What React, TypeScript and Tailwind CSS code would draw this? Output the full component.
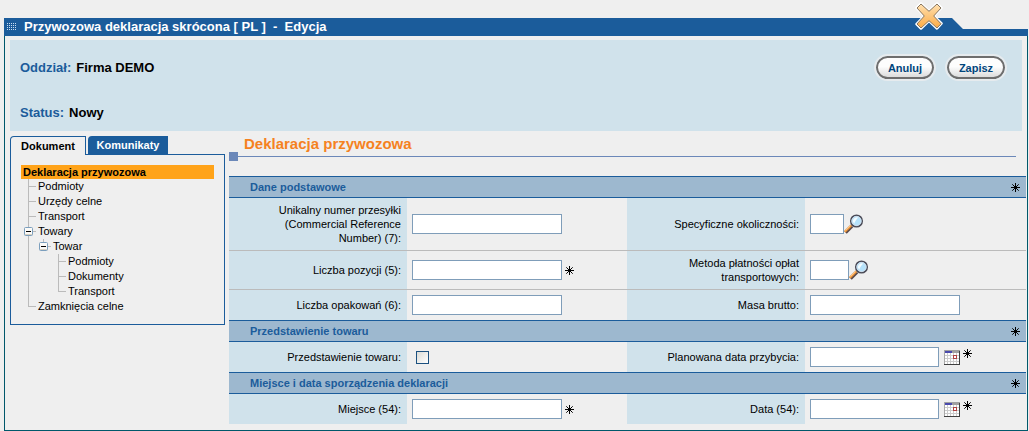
import type { ReactNode } from 'react';
import { clsx } from 'clsx';

type TreeCell = 'line' | 'blank' | 'branch' | 'end' | 'open' | 'openChild';

const TREE: { label: string; cells: TreeCell[] }[] = [
  { label: 'Podmioty', cells: ['branch'] },
  { label: 'Urzędy celne', cells: ['branch'] },
  { label: 'Transport', cells: ['branch'] },
  { label: 'Towary', cells: ['open'] },
  { label: 'Towar', cells: ['line', 'openChild'] },
  { label: 'Podmioty', cells: ['line', 'blank', 'branch'] },
  { label: 'Dokumenty', cells: ['line', 'blank', 'branch'] },
  { label: 'Transport', cells: ['line', 'blank', 'end'] },
  { label: 'Zamknięcia celne', cells: ['end'] },
];

const CELL_PATHS: Record<TreeCell, string> = {
  line: 'M7.5 0V15',
  blank: '',
  branch: 'M7.5 0V15M7 7.5H15',
  end: 'M7.5 0V8M7 7.5H15',
  open: 'M7.5 0V15M7 7.5H15',
  openChild: 'M7.5 0V8M7 7.5H15',
};

function TreeConnector({ cell }: { cell: TreeCell }) {
  const isOpen = cell === 'open' || cell === 'openChild';
  return (
    <svg width="15" height="15" viewBox="0 0 15 15" fill="none" className="shrink-0" aria-hidden="true">
      <path d={CELL_PATHS[cell]} stroke="#bbbbbb" />
      {isOpen && (
        <>
          <rect x="3.5" y="3.5" width="8" height="8" rx="1" fill="#fbfaf7" stroke="#7b9ebd" />
          <path d="M4 10.5H11" stroke="#d8d0c0" />
          <path d="M5 7.5H10" stroke="#000" />
        </>
      )}
    </svg>
  );
}

function Required() {
  return (
    <svg width="9" height="9" viewBox="0 0 9 9" className="shrink-0" aria-label="wymagane">
      <path d="M4.5 0V9M0 4.5H9" stroke="#000" />
      <path d="M1.3 1.3L7.7 7.7M7.7 1.3L1.3 7.7" stroke="#000" />
      <rect x="3" y="3" width="3" height="3" />
    </svg>
  );
}

function Magnifier() {
  return (
    <svg width="20" height="20" viewBox="0 0 20 20" fill="none">
      <path d="M1.5 18.5L8 12" stroke="#5d4a4a" strokeWidth="3.6" />
      <path d="M.8 17.8L7.4 11.2" stroke="#f39a3c" strokeWidth="2.2" />
      <path d="M1.5 16.5L6.5 11.5" stroke="#ffd09a" strokeWidth=".8" />
      <circle cx="12.5" cy="7" r="5.8" fill="#b5e2fb" stroke="#4c4c58" strokeWidth="1.5" />
      <circle cx="12.5" cy="7" r="4.6" stroke="#d3deea" strokeWidth=".9" />
      <path d="M9 8C8.6 5 10.5 3.2 13.8 3.2C14.2 4.5 11 6 10.4 9.8Z" fill="#f4fcff" />
    </svg>
  );
}

function CalendarIcon() {
  return (
    <svg width="16" height="15" viewBox="0 0 16 15" fill="none">
      <rect width="16" height="15" fill="#fff" />
      <path d="M3.5 3V14M6.5 3V14M9.5 3V14M12.5 3V14M1 5.5H15M1 8.5H15M1 11.5H15" stroke="#cccccc" />
      <rect width="16" height="3" fill="#a0a0a0" />
      <rect x="1" y="1" width="7" height="2" fill="#4a4aae" />
      <path d="M0.5 0V15" stroke="#a8a8a8" />
      <path d="M15.5 1V15M0 14.5H16" stroke="#404040" />
      <rect x="9.5" y="5.5" width="3" height="3" fill="#fff" stroke="#b04040" />
    </svg>
  );
}

function CloseIcon() {
  return (
    <svg width="28" height="28" viewBox="0 0 28 28">
      <defs>
        <linearGradient id="close-fill" x1="0" y1="0" x2="0" y2="1">
          <stop offset="0" stopColor="#ffe0b0" />
          <stop offset="1" stopColor="#fbab45" />
        </linearGradient>
      </defs>
      <path
        d="M6 1.5L14 9.2L22 1.5L26.5 6L18.8 14L26.5 21.5L22 26.5L14 18.8L6 26.5L1.5 22L9.2 14L1.5 6Z"
        fill="#fff"
        stroke="#fff"
        strokeWidth="2.5"
        strokeLinejoin="round"
      />
      <path
        d="M6 2L14 9.3L22 2L26 6L18.7 14L26 21.8L22 26L14 18.7L6 26L2 22L9.3 14L2 6Z"
        fill="url(#close-fill)"
        stroke="#85745f"
        strokeLinejoin="round"
      />
    </svg>
  );
}

function GripIcon() {
  return (
    <svg width="10" height="8" viewBox="0 0 10 8" aria-hidden="true">
      <path d="M0 .5H10M0 2.5H10M0 4.5H10M0 6.5H10" stroke="#c8dcf0" strokeDasharray="1 1" />
    </svg>
  );
}

function PillButton({ children }: { children: ReactNode }) {
  return (
    <button
      type="button"
      className="h-[23px] w-[58px] rounded-full border-2 border-[#6e6e6e] bg-linear-to-b from-[#fdfdfd] from-45% to-[#dcdcdc] text-[11px] leading-4 font-bold text-[#00457c] outline-2 outline-[#e6ebee]"
    >
      {children}
    </button>
  );
}

function SectionHeader({ title }: { title: string }) {
  return (
    <div className="flex h-[22px] items-center justify-between border-y border-[#1b5c9b] bg-[#9db8cf] pr-[6px] pl-[21px]">
      <h3 className="leading-4 font-bold text-[#1b5c9b]">{title}</h3>
      <Required />
    </div>
  );
}

function Row({ children, className }: { children: ReactNode; className?: string }) {
  return <div className={clsx('grid grid-cols-[178px_1fr_178px_1fr] pr-px', className)}>{children}</div>;
}

function Field({ id, label, children }: { id: string; label: string; children: ReactNode }) {
  return (
    <>
      <div className="flex items-center justify-end bg-[#d0e2eb] pr-[6px] pl-10">
        <label htmlFor={id} className="text-right leading-[14px]">{label}</label>
      </div>
      <div className="flex items-center pl-[5px]">{children}</div>
    </>
  );
}

function TextInput({ id, className }: { id: string; className: string }) {
  return <input id={id} type="text" className={clsx('h-5 border border-[#7f9db9] bg-white px-1 outline-none', className)} />;
}

function LookupField({ id, className }: { id: string; className: string }) {
  return (
    <>
      <TextInput id={id} className={className} />
      <button type="button" aria-label="Szukaj"><Magnifier /></button>
    </>
  );
}

function DateField({ id }: { id: string }) {
  return (
    <>
      <TextInput id={id} className="w-[129px]" />
      <button type="button" aria-label="Wybierz datę" className="ml-[5px]"><CalendarIcon /></button>
      <span className="mb-2 ml-[3px]"><Required /></span>
    </>
  );
}

export default function App() {
  return (
    <div className="bg-[#efefef] pt-[18px] pr-px pl-1 font-['Liberation_Sans',Arial,sans-serif] text-[11px] text-black">
      <div className="relative">
        <header className="flex h-[18px] items-center bg-[#1b5c9b] pl-[3px] [clip-path:polygon(0_0,calc(100%-76px)_0,calc(100%-65px)_11px,100%_11px,100%_100%,0_100%)]">
          <GripIcon />
          <h1 className="ml-[7px] text-[13px] leading-4 font-bold whitespace-pre text-white">
            {'Przywozowa deklaracja skrócona [ PL ]  -  Edycja'}
          </h1>
        </header>
        <button type="button" aria-label="Zamknij" className="absolute -top-4 right-[85px]">
          <CloseIcon />
        </button>
      </div>

      <div className="border-x border-b border-[#00586b] pt-1 pr-px pb-[6px] pl-[5px]">
        <div className="mr-1 flex h-[91px] items-start justify-between bg-[#d0e2eb] pr-[17px] pl-[10px] text-[13px] leading-4 font-bold">
          <dl className="flex flex-col gap-[29px] pt-5">
            <div className="flex gap-[5px]">
              <dt className="text-[#1b5c9b]">Oddział:</dt>
              <dd>Firma DEMO</dd>
            </div>
            <div className="flex gap-[5px]">
              <dt className="text-[#1b5c9b]">Status:</dt>
              <dd>Nowy</dd>
            </div>
          </dl>
          <div className="flex gap-[13px] pt-4">
            <PillButton>Anuluj</PillButton>
            <PillButton>Zapisz</PillButton>
          </div>
        </div>

        <div className="flex gap-1">
          <aside className="w-[215px] shrink-0 pt-[5px]">
            <div role="tablist" className="flex gap-[2px]">
              <button
                type="button"
                role="tab"
                aria-selected="true"
                className="relative -mb-px h-[19px] w-[76px] rounded-tl-sm border border-b-0 border-[#1b5c9b] bg-[#efefef] leading-4 font-bold"
              >
                Dokument
              </button>
              <button
                type="button"
                role="tab"
                aria-selected="false"
                className="h-[18px] w-[80px] rounded-tl-sm bg-[#1b5c9b] leading-4 font-bold text-white"
              >
                Komunikaty
              </button>
            </div>
            <div className="border border-[#1b5c9b] px-[10px] pt-[10px] pb-[10px]">
              <div className="h-[14px] bg-[#ffa319] pl-[2px] leading-[14px] font-bold">Deklaracja przywozowa</div>
              <ul>
                {TREE.map(({ label, cells }, i) => (
                  <li key={i} className="flex h-[15px] items-center">
                    {cells.map((cell, j) => (
                      <TreeConnector key={j} cell={cell} />
                    ))}
                    <a href="#" className="pl-[2px] leading-[15px]">{label}</a>
                  </li>
                ))}
              </ul>
            </div>
          </aside>

          <main className="min-w-0 flex-1 pt-[5px]">
            <h2 className="pl-[15px] text-[15px] leading-4 font-bold text-[#f5821f]">Deklaracja przywozowa</h2>
            <div className="mr-[10px] mb-[15px] flex items-center">
              <span className="size-[9px] bg-[#6b88b9]" />
              <span className="h-px flex-1 bg-[#6b88b9]" />
            </div>

            <form>
              <SectionHeader title="Dane podstawowe" />
              <Row className="h-[53px] border-b border-[#bbbbbb]">
                <Field id="ucr" label="Unikalny numer przesyłki (Commercial Reference Number) (7):">
                  <TextInput id="ucr" className="w-[150px]" />
                </Field>
                <Field id="circumstances" label="Specyficzne okoliczności:">
                  <LookupField id="circumstances" className="w-[34px]" />
                </Field>
              </Row>
              <Row className="h-[39px] border-b border-[#bbbbbb]">
                <Field id="items" label="Liczba pozycji (5):">
                  <TextInput id="items" className="mr-[3px] w-[150px]" />
                  <Required />
                </Field>
                <Field id="payment" label="Metoda płatności opłat transportowych:">
                  <LookupField id="payment" className="w-[39px]" />
                </Field>
              </Row>
              <Row className="h-[30px]">
                <Field id="packages" label="Liczba opakowań (6):">
                  <TextInput id="packages" className="w-[150px]" />
                </Field>
                <Field id="mass" label="Masa brutto:">
                  <TextInput id="mass" className="w-[150px]" />
                </Field>
              </Row>

              <SectionHeader title="Przedstawienie towaru" />
              <Row className="h-[30px]">
                <Field id="presentation" label="Przedstawienie towaru:">
                  <input
                    id="presentation"
                    type="checkbox"
                    className="ml-1 size-[13px] appearance-none border border-[#1c5180] bg-linear-to-br from-[#dcdcd7] to-white"
                  />
                </Field>
                <Field id="arrival" label="Planowana data przybycia:">
                  <DateField id="arrival" />
                </Field>
              </Row>

              <SectionHeader title="Miejsce i data sporządzenia deklaracji" />
              <Row className="h-[30px]">
                <Field id="place" label="Miejsce (54):">
                  <TextInput id="place" className="mr-[3px] w-[150px]" />
                  <Required />
                </Field>
                <Field id="date" label="Data (54):">
                  <DateField id="date" />
                </Field>
              </Row>
            </form>
          </main>
        </div>
      </div>
    </div>
  );
}
